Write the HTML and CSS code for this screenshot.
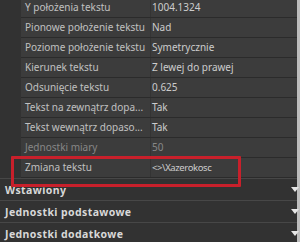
FILE: index.html
```html
<!DOCTYPE html>
<html lang="pl">
<head>
  <meta charset="UTF-8">
  <title>Właściwości</title>
  <link rel="stylesheet" href="styles.css">
</head>
<body>
  <div class="panel">
    <div class="props">
      <div class="row"><span class="label">Y położenia tekstu</span><span class="value">1004.1324</span></div>
      <div class="row"><span class="label">Pionowe położenie tekstu</span><span class="value">Nad</span></div>
      <div class="row"><span class="label">Poziome położenie tekstu</span><span class="value">Symetrycznie</span></div>
      <div class="row"><span class="label">Kierunek tekstu</span><span class="value">Z lewej do prawej</span></div>
      <div class="row"><span class="label">Odsunięcie tekstu</span><span class="value">0.625</span></div>
      <div class="row"><span class="label">Tekst na zewnątrz dopa...</span><span class="value">Tak</span></div>
      <div class="row"><span class="label">Tekst wewnątrz dopaso...</span><span class="value">Tak</span></div>
      <div class="row disabled"><span class="label">Jednostki miary</span><span class="value">50</span></div>
      <div class="row"><span class="label">Zmiana tekstu</span><span class="value code">&lt;&gt;\Xazerokosc</span></div>
      <div class="highlight"></div>
    </div>
    <div class="section"><span>Wstawiony</span><span class="arrow"></span></div>
    <div class="section"><span>Jednostki podstawowe</span><span class="arrow"></span></div>
    <div class="section"><span>Jednostki dodatkowe</span><span class="arrow"></span></div>
  </div>
</body>
</html>
```

FILE: styles.css
```css
/* properties palette, dark theme */
body {
  margin: 0;
  background-color: #2e2e2e;
  font-family: "Noto Sans", "Open Sans", sans-serif;
  overflow: hidden;
}
.panel {
  width: 300px;
  height: 244px;
  margin-top: -2px;
  border-right: 3px solid #bdbdbd;
  box-sizing: border-box;
}
.props {
  position: relative;
  padding-left: 21px;
  background-color: #323232;
}
.row {
  display: flex;
  height: 19px;
  border-bottom: 1px solid #2b2b2b;
  background-color: #3c3c3c;
  font-size: 10px;
  line-height: 19px;
  color: #cccccc;
}
.label {
  width: 122px;
  padding-left: 4px;
  margin-right: 3px;
  white-space: nowrap;
  overflow: hidden;
  color: #c0c0c0;
}
.value {
  flex: 1;
  padding-left: 1px;
  border-left: 1px solid #343434;
  white-space: nowrap;
}
.code {
  letter-spacing: -0.4px;
  font-size: 9.5px;
}
.disabled .label,
.disabled .value {
  color: #878787;
}
.highlight {
  position: absolute;
  left: 11px;
  top: 158px;
  width: 230px;
  height: 31px;
  border: 3px solid #c8202b;
  box-sizing: border-box;
  border-radius: 1px;
}
.section {
  display: flex;
  justify-content: space-between;
  align-items: center;
  height: 21px;
  padding-left: 5px;
  border-top: 1px solid #474747;
  background-color: #323232;
  font-size: 10.5px;
  font-weight: bold;
  letter-spacing: 0.4px;
  color: #d8d8d8;
}
.arrow {
  width: 0;
  height: 0;
  margin-right: -2px;
  border-left: 4px solid transparent;
  border-right: 4px solid transparent;
  border-top: 5px solid #e6e6e6;
}
```
